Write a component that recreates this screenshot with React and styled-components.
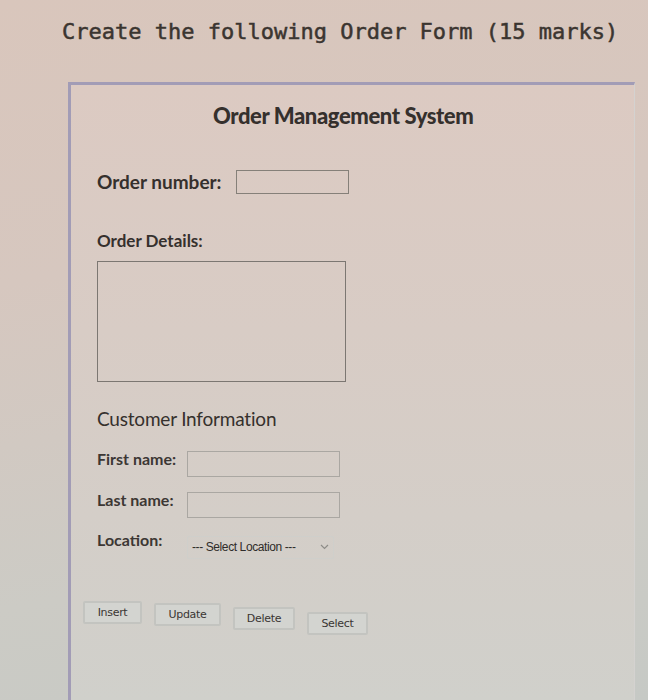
import React from 'react';
import styled, { createGlobalStyle } from 'styled-components';

const GlobalStyle = createGlobalStyle`
  html, body {
    margin: 0;
    padding: 0;
  }
  body {
    width: 648px;
    height: 700px;
    overflow: hidden;
    background: linear-gradient(170deg, #d9c6bc 0%, #d6c7bf 35%, #cccbc5 75%, #c6c9c5 100%);
    font-family: Lato, "Open Sans", sans-serif;
    color: #3a3532;
  }
`;

const Page = styled.div`
  display: flex;
  flex-direction: column;
  height: 700px;
`;

const Heading = styled.div`
  padding: 18px 0 0 62px;
  font-family: "DejaVu Sans Mono", "Liberation Mono", monospace;
  font-size: 22px;
  line-height: 28px;
  color: #3b3530;
  -webkit-text-stroke: 0.5px #3b3530;
  white-space: nowrap;
`;

const Panel = styled.div`
  margin: 36px 0 0 68px;
  width: 567px;
  flex: 1;
  border-top: 3px solid #a29cb6;
  border-left: 3px solid #a29cb6;
  border-right: 1px solid #d4d2d0;
  background: linear-gradient(180deg, #dccac2 0%, #d8ccc5 40%, #d0d0cb 100%);
  display: flex;
  flex-direction: column;
  padding: 18px 0 0 26px;
  box-sizing: border-box;
`;

const Title = styled.h1`
  margin: 0 0 0 116px;
  font-family: Lato, "Open Sans", sans-serif;
  font-weight: 900;
  font-size: 22px;
  line-height: 26px;
  letter-spacing: -0.4px;
  color: #35302d;
`;

const Row = styled.div`
  display: flex;
  align-items: ${({ $center }) => ($center ? 'center' : 'flex-start')};
  margin-top: ${({ $top }) => $top}px;
`;

const BigLabel = styled.label`
  font-weight: 700;
  font-size: 19px;
  line-height: 24px;
  width: 139px;
  color: #35302d;
`;

const SectionLabel = styled.div`
  margin-top: ${({ $top }) => $top}px;
  font-weight: 700;
  font-size: 17px;
  line-height: 20px;
  color: #35302d;
`;

const SectionTitle = styled.div`
  margin-top: 25px;
  font-weight: 400;
  font-size: 19px;
  line-height: 24px;
  letter-spacing: -0.2px;
  color: #35302d;
`;

const SmallLabel = styled.label`
  width: 90px;
  font-weight: 700;
  font-size: 16px;
  line-height: 16px;
  margin-top: ${({ $shift }) => $shift || 0}px;
  color: #3c3734;
`;

const TextInput = styled.input`
  box-sizing: border-box;
  width: ${({ $w }) => $w}px;
  height: ${({ $h }) => $h}px;
  border: 1px solid ${({ $dark }) => ($dark ? '#858079' : '#aaa7a2')};
  background: transparent;
  padding: 0 4px;
  margin: 0;
`;

const TextArea = styled.textarea`
  box-sizing: border-box;
  margin-top: 10px;
  width: 249px;
  height: 121px;
  border: 1px solid #7c7772;
  background: transparent;
  resize: none;
  padding: 4px;
`;

const SelectWrap = styled.div`
  position: relative;
  width: 147px;
  height: 23px;
`;

const Select = styled.select`
  appearance: none;
  box-sizing: border-box;
  width: 100%;
  height: 100%;
  margin: 0;
  border: 1px solid #cfcfcb;
  border-radius: 2px;
  background: transparent;
  padding: 0 0 0 4px;
  font-family: "Liberation Sans", Arial, sans-serif;
  font-size: 12px;
  letter-spacing: -0.4px;
  color: #2f2c2a;
`;

const Chevron = styled.svg`
  position: absolute;
  right: 5px;
  top: 9px;
  pointer-events: none;
`;

const ButtonRow = styled.div`
  display: flex;
  align-items: flex-start;
  gap: 12px;
  margin: 43px 0 0 -14px;
`;

const Button = styled.button`
  box-sizing: border-box;
  width: ${({ $w }) => $w}px;
  height: 23px;
  margin-top: ${({ $drop }) => $drop}px;
  padding: 0;
  border: 2px solid #c3c4c0;
  border-radius: 2px;
  background: #d3d4d0;
  font-family: "DejaVu Sans", "Liberation Sans", sans-serif;
  font-size: 11px;
  letter-spacing: -0.3px;
  color: #3a3633;
`;

export default function App() {
  return (
    <Page>
      <GlobalStyle />
      <Heading>Create the following Order Form (15 marks)</Heading>
      <Panel>
        <Title>Order Management System</Title>

        <Row $top={41} $center>
          <BigLabel>Order number:</BigLabel>
          <TextInput $w={113} $h={24} $dark />
        </Row>

        <SectionLabel $top={37}>Order Details:</SectionLabel>
        <TextArea />

        <SectionTitle>Customer Information</SectionTitle>

        <Row $top={20}>
          <SmallLabel $shift={0}>First name:</SmallLabel>
          <TextInput $w={153} $h={26} />
        </Row>

        <Row $top={15}>
          <SmallLabel $shift={0}>Last name:</SmallLabel>
          <TextInput $w={153} $h={26} />
        </Row>

        <Row $top={17}>
          <SmallLabel $shift={-3}>Location:</SmallLabel>
          <SelectWrap>
            <Select defaultValue="">
              <option value="">--- Select Location ---</option>
              <option>North</option>
              <option>South</option>
            </Select>
            <Chevron width="9" height="6" viewBox="0 0 9 6">
              <path d="M1 1 L4.5 4.5 L8 1" fill="none" stroke="#8d8c88" strokeWidth="1.2" />
            </Chevron>
          </SelectWrap>
        </Row>

        <ButtonRow>
          <Button $w={59} $drop={0}>Insert</Button>
          <Button $w={67} $drop={2}>Update</Button>
          <Button $w={62} $drop={6}>Delete</Button>
          <Button $w={61} $drop={11}>Select</Button>
        </ButtonRow>
      </Panel>
    </Page>
  );
}
